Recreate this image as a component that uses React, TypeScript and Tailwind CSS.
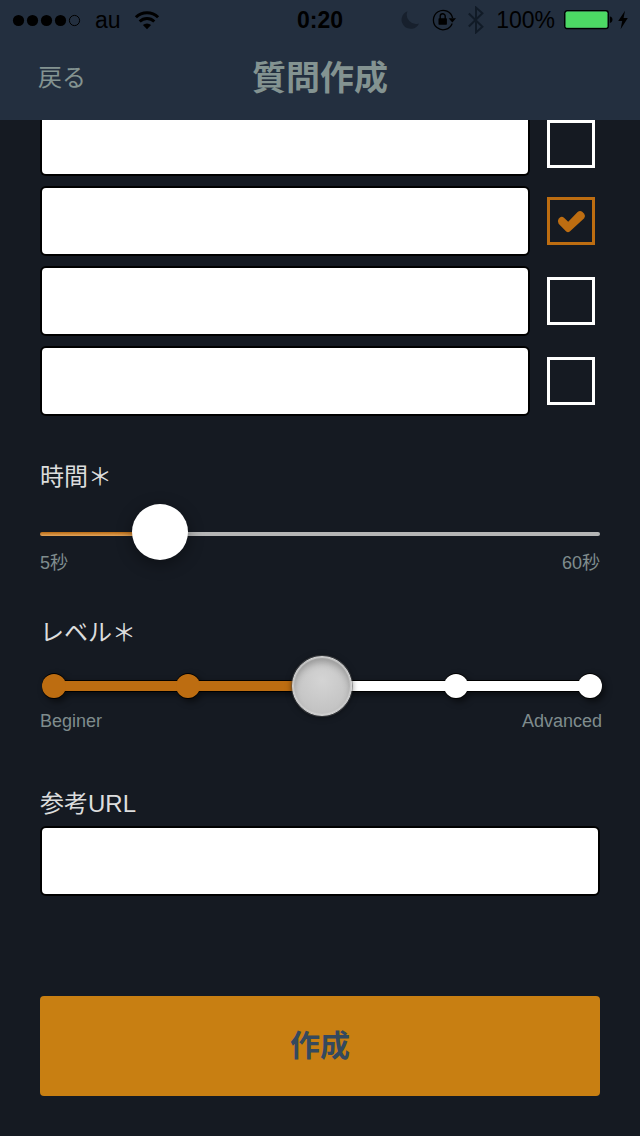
import { useState } from 'react';

const answers = [
  { id: 1, clipped: true, correct: false },
  { id: 2, clipped: false, correct: true },
  { id: 3, clipped: false, correct: false },
  { id: 4, clipped: false, correct: false },
];

const levels = [0, 1, 2, 3, 4];

const field =
  'min-w-0 rounded-md border-2 border-black bg-white px-3 text-2xl text-black outline-none';

function StatusBar() {
  return (
    <div className="grid h-10 grid-cols-[1fr_auto_1fr] items-center pl-3 pr-3 text-[23px] leading-10 text-black">
      <div className="flex items-center">
        <svg className="h-4 w-[70px]" viewBox="0 0 70 16" aria-hidden="true">
          <circle cx="6.5" cy="8.5" r="5.6" />
          <circle cx="20.5" cy="8.5" r="5.6" />
          <circle cx="34.5" cy="8.5" r="5.6" />
          <circle cx="48.5" cy="8.5" r="5.6" />
          <circle cx="62.5" cy="8.5" r="5.1" fill="none" stroke="#000" />
        </svg>
        <span className="ml-[13px]">au</span>
        <svg className="ml-[13px] h-5 w-[26px]" viewBox="0 0 26 20" aria-hidden="true">
          <path d="M13 19.2 8.9 15.1a5.8 5.8 0 0 1 8.2 0z" />
          <path d="M5.7 11.6a10.3 10.3 0 0 1 14.6 0" fill="none" stroke="#000" strokeWidth="2.9" />
          <path d="M1.9 7.2a15.8 15.8 0 0 1 22.2 0" fill="none" stroke="#000" strokeWidth="3" />
        </svg>
      </div>
      <span className="font-bold">0:20</span>
      <div className="flex items-center justify-end">
        <svg className="h-5 w-5" viewBox="0 0 20 20" aria-hidden="true">
          <path d="M7.5 1.2A9.1 9.1 0 1 0 19 13.4 9.2 9.2 0 0 1 7.5 1.2z" fill="#17202d" />
        </svg>
        <svg className="ml-3 h-[22px] w-6" viewBox="0 0 24 22" aria-hidden="true">
          <path d="M20.2 14.5A9.7 9.7 0 1 1 20.6 9" fill="none" stroke="#000" strokeWidth="1.3" />
          <path d="M16.6 9.3h7.4l-3.7 4.2z" />
          <rect x="6.5" y="9.3" width="8.4" height="6.4" rx="0.6" />
          <path d="M8.2 10V7.3a2.5 2.5 0 0 1 5 0V10" fill="none" stroke="#000" strokeWidth="1.4" />
        </svg>
        <svg className="ml-3 h-7 w-4" viewBox="0 0 16 28" aria-hidden="true">
          <path d="m.8 7.5 13.6 13.2L8 26.4V1.6l6.4 5.7L.8 20.5" fill="none" stroke="#111b27" strokeWidth="2" />
        </svg>
        <span className="ml-3">100%</span>
        <svg className="ml-[9px] h-5 w-[50px]" viewBox="0 0 50 20" aria-hidden="true">
          <rect x="0.7" y="0.7" width="43.6" height="18" rx="2.6" fill="none" stroke="#000" strokeWidth="1.3" />
          <rect x="1.6" y="1.6" width="41.8" height="16.2" rx="1.6" fill="#4cd964" />
          <path d="M45.8 6.6c3.6.4 3.6 6 0 6.4z" />
        </svg>
        <svg className="ml-1 h-5 w-[10px]" viewBox="0 0 10 20" aria-hidden="true">
          <path d="M7 .8.2 11h4L2.6 19.2 9.8 8H5.6z" />
        </svg>
      </div>
    </div>
  );
}

function AnswerRow({ id, clipped, correct }: { id: number; clipped: boolean; correct: boolean }) {
  const [checked, setChecked] = useState(correct);
  return (
    <li className={clipped ? 'flex items-start gap-[17px] pr-[5px]' : 'flex items-center gap-[17px] pr-[5px]'}>
      <input
        type="text"
        aria-label={`${id}`}
        className={
          clipped
            ? 'h-14 min-w-0 flex-1 rounded-b-md border-2 border-t-0 border-black bg-white px-3 text-2xl text-black outline-none'
            : `h-[70px] flex-1 ${field}`
        }
      />
      <label className="grid size-12 shrink-0 place-items-center">
        <input
          type="checkbox"
          aria-label={`${id}`}
          checked={checked}
          onChange={(e) => setChecked(e.target.checked)}
          className="col-start-1 row-start-1 size-12 appearance-none border-3 border-white checked:border-[#bd6d11]"
        />
        {checked && (
          <svg className="pointer-events-none col-start-1 row-start-1 size-12" viewBox="0 0 48 48" aria-hidden="true">
            <path
              d="M11.6 21.8 12.6 20.7Q14.8 19 17 20.7L21.2 24.8 30.6 15Q33 13 35.2 14.8L37.2 16.8Q38.8 19 37.2 21.2L22.8 34.4Q21 36 19.2 34.4L11.6 26.8Q10 24.4 11.6 21.8z"
              fill="#bd6d11"
            />
          </svg>
        )}
      </label>
    </li>
  );
}

function TimeSlider() {
  const [seconds, setSeconds] = useState(15);
  const filled = ((seconds - 5) / 55) * 100;
  return (
    <section className="mt-[45px]">
      <label htmlFor="time" className="block text-2xl leading-8">
        時間＊
      </label>
      <input
        id="time"
        type="range"
        min={5}
        max={60}
        value={seconds}
        onChange={(e) => setSeconds(Number(e.target.value))}
        style={{ ['--filled' as string]: `${filled}%` }}
        className="mt-[23px] block h-9 w-full appearance-none bg-transparent outline-none [&::-webkit-slider-runnable-track]:h-1 [&::-webkit-slider-runnable-track]:rounded-full [&::-webkit-slider-runnable-track]:bg-[#b5b6b6] [&::-webkit-slider-runnable-track]:bg-[linear-gradient(#b96b14,#e3a55c)] [&::-webkit-slider-runnable-track]:[background-size:var(--filled)_100%] [&::-webkit-slider-runnable-track]:bg-no-repeat [&::-webkit-slider-thumb]:-mt-7 [&::-webkit-slider-thumb]:size-14 [&::-webkit-slider-thumb]:appearance-none [&::-webkit-slider-thumb]:rounded-full [&::-webkit-slider-thumb]:bg-white [&::-webkit-slider-thumb]:shadow-[0_4px_16px_rgba(0,0,0,0.4)]"
      />
      <div className="flex justify-between text-lg leading-[22px] text-[#7f8c8d]">
        <span>5秒</span>
        <span>60秒</span>
      </div>
    </section>
  );
}

function LevelSlider() {
  const [level, setLevel] = useState(2);
  return (
    <section className="mt-[43px] -mr-0.5">
      <label htmlFor="level" className="block text-2xl leading-8">
        レベル＊
      </label>
      <div className="relative mt-[13px] ml-0.5 h-12">
        <div className="grid h-full items-center [filter:drop-shadow(0_1px_0_#000)_drop-shadow(0_-1px_0_#000)_drop-shadow(3px_3px_3px_rgba(0,0,0,0.5))]">
          <div className="col-start-1 row-start-1 mx-3 h-[10px] bg-white">
            <div className="h-full bg-[#bd6d11]" style={{ width: `${level * 25}%` }} />
          </div>
          <div className="col-start-1 row-start-1 flex justify-between">
            {levels.map((step) => (
              <span
                key={step}
                className={step <= level ? 'size-6 rounded-full bg-[#bd6d11]' : 'size-6 rounded-full bg-white'}
              />
            ))}
          </div>
        </div>
        <input
          id="level"
          type="range"
          min={0}
          max={4}
          value={level}
          onChange={(e) => setLevel(Number(e.target.value))}
          className="absolute inset-y-0 -left-[18px] block h-full w-[calc(100%+36px)] appearance-none bg-transparent outline-none [&::-webkit-slider-thumb]:size-[60px] [&::-webkit-slider-thumb]:appearance-none [&::-webkit-slider-thumb]:rounded-full [&::-webkit-slider-thumb]:border [&::-webkit-slider-thumb]:border-[#d2d2d2] [&::-webkit-slider-thumb]:bg-[radial-gradient(circle_at_50%_40%,#d4d4d4,#bcbcbc)] [&::-webkit-slider-thumb]:shadow-[inset_0_0_1px_1px_rgba(215,215,215,0.8),inset_0_5px_7px_rgba(0,0,0,0.25),0_0_0_1px_rgba(90,90,90,0.5),0_1px_6px_rgba(0,0,0,0.5)]"
        />
      </div>
      <div className="flex justify-between text-lg leading-[22px] text-[#7f8c8d]">
        <span>Beginer</span>
        <span>Advanced</span>
      </div>
    </section>
  );
}

export default function App() {
  return (
    <div className="min-h-screen bg-[#151a22] font-['Liberation_Sans','Noto_Sans_CJK_JP',sans-serif] text-[#dcdddd]">
      <header className="h-[120px] bg-[#232f3f]">
        <StatusBar />
        <div className="grid h-[76px] grid-cols-[1fr_auto_1fr] items-center px-[38px] text-[#839391]">
          <button type="button" className="justify-self-start text-2xl leading-8">
            戻る
          </button>
          <h1 className="text-[34px] leading-[42px] font-bold">質問作成</h1>
        </div>
      </header>
      <form className="px-10 pb-10" onSubmit={(e) => e.preventDefault()}>
        <ul className="flex flex-col gap-[10px]">
          {answers.map((answer) => (
            <AnswerRow key={answer.id} {...answer} />
          ))}
        </ul>
        <TimeSlider />
        <LevelSlider />
        <section className="mt-14">
          <label htmlFor="url" className="block text-2xl leading-8">
            参考URL
          </label>
          <input id="url" type="url" className={`mt-[6px] block h-[70px] w-full ${field}`} />
        </section>
        <button
          type="submit"
          className="mt-[100px] block h-[100px] w-full rounded bg-[#c87f12] text-[30px] leading-10 font-bold text-[#34495e]"
        >
          作成
        </button>
      </form>
    </div>
  );
}
